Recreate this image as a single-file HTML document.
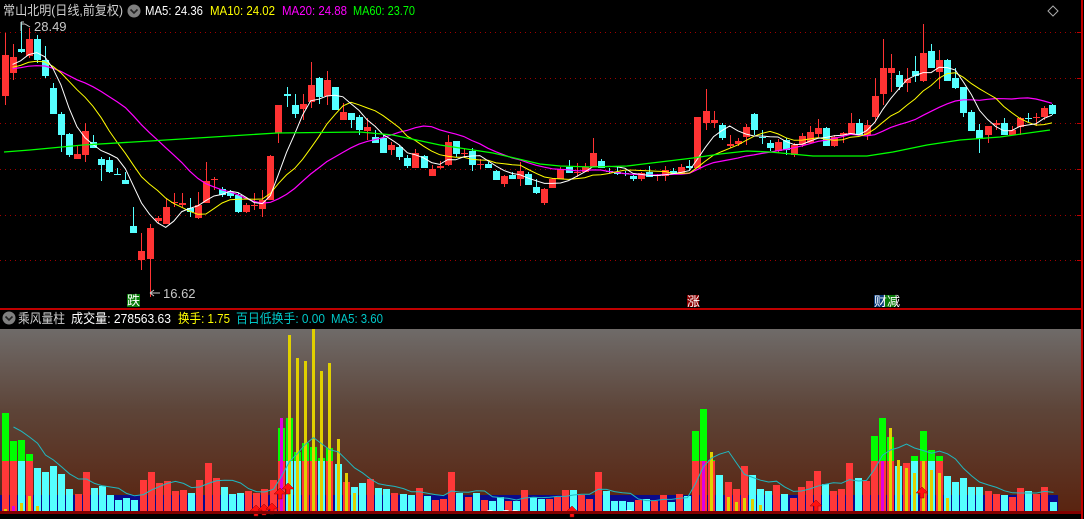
<!DOCTYPE html>
<html><head><meta charset="utf-8">
<style>
html,body{margin:0;padding:0;background:#000;width:1084px;height:519px;overflow:hidden}
svg{display:block}
text{font-family:"Liberation Sans","Noto Sans CJK SC",sans-serif;font-size:13px}
</style></head>
<body>
<svg id="s" width="1084" height="519" xmlns="http://www.w3.org/2000/svg">
<defs>
<linearGradient id="g" x1="0" y1="0" x2="0" y2="1">
<stop offset="0" stop-color="#6f6b69"/>
<stop offset="0.45" stop-color="#5d4438"/>
<stop offset="1" stop-color="#5a2410"/>
</linearGradient>
</defs>
<rect x="0" y="0" width="1084" height="519" fill="#000"/>
<g id="grid"></g>
<g id="main"></g>
<rect x="0" y="308" width="1082" height="2" fill="#c00000"/>
<rect x="0" y="329" width="1082" height="182" fill="url(#g)"/>
<rect x="0" y="495" width="1058" height="16" fill="#0a0a8c"/>
<g id="vol"></g>
<rect x="0" y="511" width="1082" height="3" fill="#800000"/>
<rect x="1081" y="0" width="2" height="519" fill="#c00000"/>
<text x="3" y="15" fill="#d0d0d0" textLength="120" lengthAdjust="spacingAndGlyphs">常山北明(日线,前复权)</text>
<circle cx="134" cy="11" r="6.5" fill="#808080"/>
<path d="M130.5 9.5 L134 13 L137.5 9.5" stroke="#222" stroke-width="1.6" fill="none"/>
<text x="145" y="15" fill="#ffffff" textLength="58" lengthAdjust="spacingAndGlyphs">MA5: 24.36</text>
<text x="210" y="15" fill="#ffff00" textLength="65" lengthAdjust="spacingAndGlyphs">MA10: 24.02</text>
<text x="282" y="15" fill="#ff00ff" textLength="65" lengthAdjust="spacingAndGlyphs">MA20: 24.88</text>
<text x="353" y="15" fill="#00ff00" textLength="62" lengthAdjust="spacingAndGlyphs">MA60: 23.70</text>
<path d="M1053 6 L1058 11 L1053 16 L1048 11 Z" stroke="#aaa" fill="none"/>
<path d="M21 22 L21 31 M21 22 L24 22 M21 24 L25 24 M25 24 L30 27" stroke="#ccc" fill="none"/>
<text x="34" y="31" fill="#c8c8c8" font-size="12">28.49</text>
<path d="M150 293 L160 293 M150 293 L154 290 M150 293 L154 296" stroke="#ccc" fill="none"/>
<text x="163" y="298" fill="#c8c8c8" font-size="12">16.62</text>
<rect x="127" y="294" width="13" height="13" fill="#0a7a0a"/>
<text x="127" y="305" fill="#fff" font-size="12">跌</text>
<rect x="687" y="295" width="12" height="12" fill="#8a0000"/>
<text x="687" y="306" fill="#fff" font-size="11">涨</text>
<rect x="874" y="295" width="11" height="12" fill="#0a3a7a"/>
<rect x="885" y="295" width="11" height="12" fill="#0a7a0a"/>
<text x="874" y="306" fill="#fff" font-size="11">财减</text>
<circle cx="9" cy="318" r="6.5" fill="#808080"/>
<path d="M5.5 316.5 L9 320 L12.5 316.5" stroke="#222" stroke-width="1.6" fill="none"/>
<text x="18" y="323" fill="#d0d0d0" textLength="47" lengthAdjust="spacingAndGlyphs">乘风量柱</text>
<text x="71" y="323" fill="#ffffff" textLength="100" lengthAdjust="spacingAndGlyphs">成交量: 278563.63</text>
<text x="178" y="323" fill="#ffff00" textLength="52" lengthAdjust="spacingAndGlyphs">换手: 1.75</text>
<text x="236" y="323" fill="#00c8c8" textLength="89" lengthAdjust="spacingAndGlyphs">百日低换手: 0.00</text>
<text x="331" y="323" fill="#00c8c8" textLength="52" lengthAdjust="spacingAndGlyphs">MA5: 3.60</text>
</svg>
<script>
var NS="http://www.w3.org/2000/svg";
function el(p,t,a){var e=document.createElementNS(NS,t);for(var k in a)e.setAttribute(k,a[k]);document.getElementById(p).appendChild(e);return e;}
[32,78,123,169,215,260].forEach(function(y){el("grid","line",{x1:0,y1:y+0.5,x2:1081,y2:y+0.5,stroke:"#a00000","stroke-dasharray":"1 4"});el("grid","line",{x1:1077,y1:y+0.5,x2:1081,y2:y+0.5,stroke:"#c00000"});});
var C="r 55 96 33 105|r 57 73 44 80|c 49 52 22 53|r 39 56 28 58|c 39 60 35 63|c 60 76 46 78|c 88 114 83 114|c 114 135 112 152|c 134 155 133 157|r 154 159 145 159|r 131 155 123 162|c 142 148 135 148|c 159 165 157 181|c 160 172 157 173|c 174 175 168 175|c 180 184 172 184|c 226 233 207 233|r 251 260 233 270|r 228 259 224 297|r 218 221 216 223|r 207 224 199 224|r 202 203 193 207|r 203 205 193 207|c 208 212 198 217|r 205 218 192 219|r 181 203 162 203|r 179 180 177 190|c 189 195 187 197|c 192 196 190 198|c 195 212 193 213|r 205 212 203 213|r 205 206 193 210|r 200 209 190 217|r 156 200 155 200|r 105 133 105 143|c 94 96 87 107|c 105 114 94 118|r 104 109 94 120|r 85 102 62 108|c 78 97 77 104|r 80 96 71 105|c 87 110 87 110|r 112 120 103 120|c 113 120 113 128|c 117 130 115 135|r 127 131 118 140|c 137 143 130 143|c 138 153 134 153|r 145 150 142 155|c 147 157 145 160|c 158 166 155 168|r 153 168 149 168|c 156 168 155 168|r 169 176 165 176|r 166 168 161 169|r 142 165 135 166|c 141 154 141 157|r 153 154 148 158|c 151 165 148 171|r 164 165 159 169|c 164 168 162 168|c 171 180 170 180|r 176 184 175 187|c 175 179 172 179|r 171 179 162 186|c 174 185 172 185|c 187 193 179 194|r 189 203 188 205|r 179 188 178 188|r 169 179 167 179|c 167 173 160 173|r 172 173 163 177|r 167 172 163 172|r 153 167 138 167|c 161 168 159 168|c 171 172 168 173|c 172 174 167 175|c 173 174 171 176|c 176 179 175 181|r 173 179 172 181|c 172 177 166 177|r 175 176 174 181|r 170 176 166 181|c 171 173 168 174|r 167 173 164 173|c 166 168 160 170|r 117 168 117 168|r 111 123 89 130|r 120 123 111 128|c 125 138 123 140|r 144 146 135 148|r 141 144 138 146|r 127 137 124 145|c 114 130 113 135|c 137 138 130 144|c 143 148 140 151|r 142 151 139 153|c 140 150 138 155|r 145 155 143 157|r 136 145 133 147|r 132 143 126 143|r 128 134 119 137|c 128 146 127 146|r 137 146 135 147|r 133 135 132 143|r 123 135 113 135|c 123 135 119 135|r 125 135 120 140|r 96 117 78 122|r 68 94 39 105|r 68 73 54 92|c 75 87 71 90|r 79 83 68 92|c 71 76 56 82|r 53 81 24 82|c 51 68 44 68|r 60 72 50 89|c 60 81 59 81|c 78 88 68 89|c 87 113 87 117|c 112 131 110 131|c 130 139 124 153|r 126 135 126 143|r 123 125 120 130|c 123 135 118 135|r 130 135 126 135|r 118 127 117 135|c 118 119 113 122|r 117 118 113 126|r 108 117 106 120|c 105 114 104 115".split("|").map(function(s){var a=s.split(" ");return [a[0],+a[1],+a[2],+a[3],+a[4]];});
var N=C.length,sp=(1052-4.5)/(N-1);
function cx(i){return 4.5+sp*i;}
var closes=[];
C.forEach(function(d,i){
 var x=Math.round(cx(i)),col=d[0]=="r"?"#ff3333":"#55ffff";
 closes.push(d[0]=="r"?d[1]:d[2]);
 el("main","rect",{x:x,y:d[3],width:1,height:Math.max(1,d[4]-d[3]),fill:col});
 el("main","rect",{x:x-3,y:d[1],width:7,height:Math.max(1,d[2]-d[1]),fill:col});
});
var pad=[];for(var k=0;k<20;k++)pad.push(70);
var all=pad.concat(closes);
function ma(n,color,w){var pts=[];for(var i=1;i<N;i++){var s=0;for(var j=0;j<n;j++)s+=all[20+i-j];pts.push(cx(i).toFixed(1)+","+(s/n).toFixed(1));}
 el("main","polyline",{points:pts.join(" "),fill:"none",stroke:color,"stroke-width":w});}
ma(20,"#ff00ff",1.2);ma(10,"#ffff00",1);ma(5,"#ffffff",1);
el("main","polyline",{points:"4,152 30,150 83,145 150,141 277,133 360,132 393,135 440,145 493,153 540,164 560,166 593,167 627,166 660,162 693,158 720,154 747,151 770,152 813,156 867,156 893,152 927,145 960,140 1000,137 1050,130",fill:"none",stroke:"#00ff00","stroke-width":1.3});
var V="r 413|r 441|c 440|r 454|c 468|c 472|c 466|c 474|c 489|r 494|r 472|c 488|c 486|c 495|c 500|c 498|c 500|r 480|r 472|r 483|r 481|r 491|r 490|c 493|r 480|r 463|r 478|c 487|c 494|c 493|r 491|r 493|r 489|r 480|r 428|c 418|c 452|r 443|r 447|c 458|r 448|c 464|r 482|c 487|c 483|r 479|c 488|c 489|r 493|c 494|c 495|r 488|c 496|r 500|r 499|r 472|c 493|r 497|c 493|r 500|c 501|c 497|r 501|c 501|r 490|c 497|c 499|r 499|r 497|r 490|c 490|r 495|r 499|r 472|c 491|c 501|c 501|c 502|r 500|c 499|r 501|r 495|c 502|r 494|c 496|r 431|r 409|r 460|c 475|r 482|r 489|r 466|c 475|c 489|c 491|r 485|c 494|r 498|r 487|r 481|r 471|c 484|r 491|r 489|r 463|c 478|r 481|r 436|r 418|r 437|c 466|r 463|c 456|r 431|c 450|r 456|c 476|c 482|c 478|c 487|c 487|r 491|r 494|c 495|r 497|r 488|c 491|r 494|r 487|c 502".split("|").map(function(s){var a=s.split(" ");return [a[0],+a[1]];});
var M=V.length,vs=(1052.5-4.5)/(M-1);
function vx(i){return Math.round(4.5+vs*i)-3;}
var Y={0:509,2:503,3:496,4:506,35:335,36:358,37:361,38:329,39:371,40:363,41:439,42:473,43:493,87:452,89:497,90:502,91:498,92:499,93:505,109:428,110:460,111:468,112:473,113:461,114:470,115:473,116:498};
V.forEach(function(d,i){
 var x=vx(i),col=d[0]=="r"?"#ff3838":"#55ffff";
 el("vol","rect",{x:x,y:d[1],width:7,height:511-d[1],fill:col});
 if(d[1]<461)el("vol","rect",{x:x,y:d[1],width:7,height:461-d[1],fill:"#00ff00"});
 if(Y[i])el("vol","rect",{x:x+2,y:Y[i],width:3,height:511-Y[i],fill:"#e0d000"});
});
[[1,506],[34,418],[86,461],[108,461]].forEach(function(m){el("vol","rect",{x:vx(m[0])+2,y:m[1],width:3,height:511-m[1],fill:"#e000e0"});});
var vp=[];for(var i=1;i<M;i++){var s=0,n=Math.min(5,i+1);for(var j=0;j<n;j++)s+=V[i-j][1];vp.push((vx(i)+3.5)+","+(s/n).toFixed(1));}
el("vol","polyline",{points:vp.join(" "),fill:"none",stroke:"#20b8c0","stroke-width":1});
[[256,505],[264,504],[272,503],[280,488],[288,483],[572,506],[816,500],[922,487]].forEach(function(a){var x=a[0],y=a[1];
 el("vol","path",{d:"M"+x+" "+y+" L"+(x+6)+" "+(y+6)+" L"+(x+2)+" "+(y+6)+" L"+(x+2)+" "+(y+11)+" L"+(x-2)+" "+(y+11)+" L"+(x-2)+" "+(y+6)+" L"+(x-6)+" "+(y+6)+" Z",fill:"#ff1010",stroke:"#900","stroke-width":0.5});});
[490,506,515,629].forEach(function(x){el("vol","ellipse",{cx:x,cy:512,rx:4,ry:2,fill:"#fff"});});
</script>
</body></html>
